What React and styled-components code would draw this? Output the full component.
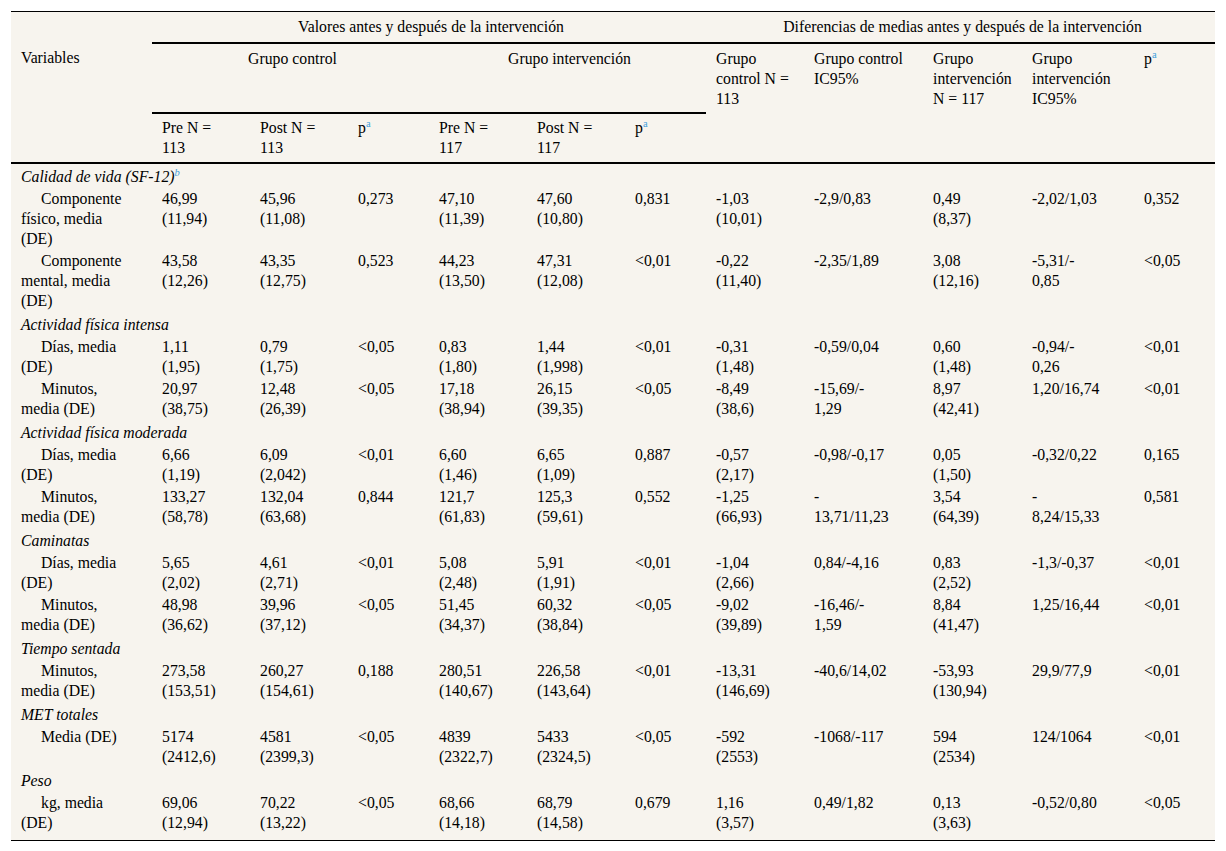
import React from 'react'
import styled, { createGlobalStyle } from 'styled-components'

const GlobalStyle = createGlobalStyle`
    html, body {
        margin: 0;
        padding: 0;
        background: #ffffff;
    }
    body {
        font-family: "Liberation Serif", "Times New Roman", serif;
        color: #000;
    }
`

const Page = styled.div`
    padding: 11px 11px 0 11px;
`

const Table = styled.table`
    width: 1204px;
    table-layout: fixed;
    border-collapse: collapse;
    background: #f7f4ee;
    border-top: 1px solid #000;
    border-bottom: 1px solid #000;
    font-size: 15.75px;
    line-height: 20px;
`

const Head = styled.thead`
    border-bottom: 2px solid #000;
`

const HeadCell = styled.th`
    font-weight: normal;
    text-align: ${(p) => (p.$center ? 'center' : 'left')};
    vertical-align: top;
    padding: 5px 6px 4px 10px;
    white-space: pre-line;
    border-bottom: ${(p) => (p.$rule ? '2px solid #000' : 'none')};
    tr:first-child > & {
        padding-bottom: 5px;
    }
    tr:nth-child(3) > & {
        padding-top: 4px;
    }
`

const SectionCell = styled.td`
    font-style: italic;
    padding: 3px 10px 1px 10px;
    white-space: nowrap;
`

const Cell = styled.td`
    vertical-align: top;
    padding: 1px 6px 1px 10px;
    white-space: pre-line;
    text-indent: ${(p) => (p.$indent ? '20px' : '0')};
    tr:last-child > & {
        padding-bottom: 7px;
    }
`

const Sup = styled.sup`
    color: #3f9fdc;
    font-size: 10.5px;
    line-height: 0;
    vertical-align: 6px;
`

const widths = [141, 98, 98, 81, 98, 98, 81, 98, 119, 99, 112, 81]

const sections = [
    {
        title: 'Calidad de vida (SF-12)',
        sup: 'b',
        rows: [
            ['Componente\nfísico, media\n(DE)', '46,99\n(11,94)', '45,96\n(11,08)', '0,273', '47,10\n(11,39)', '47,60\n(10,80)', '0,831', '-1,03\n(10,01)', '-2,9/0,83', '0,49\n(8,37)', '-2,02/1,03', '0,352'],
            ['Componente\nmental, media\n(DE)', '43,58\n(12,26)', '43,35\n(12,75)', '0,523', '44,23\n(13,50)', '47,31\n(12,08)', '<0,01', '-0,22\n(11,40)', '-2,35/1,89', '3,08\n(12,16)', '-5,31/-\n0,85', '<0,05'],
        ],
    },
    {
        title: 'Actividad física intensa',
        rows: [
            ['Días, media\n(DE)', '1,11\n(1,95)', '0,79\n(1,75)', '<0,05', '0,83\n(1,80)', '1,44\n(1,998)', '<0,01', '-0,31\n(1,48)', '-0,59/0,04', '0,60\n(1,48)', '-0,94/-\n0,26', '<0,01'],
            ['Minutos,\nmedia (DE)', '20,97\n(38,75)', '12,48\n(26,39)', '<0,05', '17,18\n(38,94)', '26,15\n(39,35)', '<0,05', '-8,49\n(38,6)', '-15,69/-\n1,29', '8,97\n(42,41)', '1,20/16,74', '<0,01'],
        ],
    },
    {
        title: 'Actividad física moderada',
        rows: [
            ['Días, media\n(DE)', '6,66\n(1,19)', '6,09\n(2,042)', '<0,01', '6,60\n(1,46)', '6,65\n(1,09)', '0,887', '-0,57\n(2,17)', '-0,98/-0,17', '0,05\n(1,50)', '-0,32/0,22', '0,165'],
            ['Minutos,\nmedia (DE)', '133,27\n(58,78)', '132,04\n(63,68)', '0,844', '121,7\n(61,83)', '125,3\n(59,61)', '0,552', '-1,25\n(66,93)', '-\n13,71/11,23', '3,54\n(64,39)', '-\n8,24/15,33', '0,581'],
        ],
    },
    {
        title: 'Caminatas',
        rows: [
            ['Días, media\n(DE)', '5,65\n(2,02)', '4,61\n(2,71)', '<0,01', '5,08\n(2,48)', '5,91\n(1,91)', '<0,01', '-1,04\n(2,66)', '0,84/-4,16', '0,83\n(2,52)', '-1,3/-0,37', '<0,01'],
            ['Minutos,\nmedia (DE)', '48,98\n(36,62)', '39,96\n(37,12)', '<0,05', '51,45\n(34,37)', '60,32\n(38,84)', '<0,05', '-9,02\n(39,89)', '-16,46/-\n1,59', '8,84\n(41,47)', '1,25/16,44', '<0,01'],
        ],
    },
    {
        title: 'Tiempo sentada',
        rows: [
            ['Minutos,\nmedia (DE)', '273,58\n(153,51)', '260,27\n(154,61)', '0,188', '280,51\n(140,67)', '226,58\n(143,64)', '<0,01', '-13,31\n(146,69)', '-40,6/14,02', '-53,93\n(130,94)', '29,9/77,9', '<0,01'],
        ],
    },
    {
        title: 'MET totales',
        rows: [
            ['Media (DE)', '5174\n(2412,6)', '4581\n(2399,3)', '<0,05', '4839\n(2322,7)', '5433\n(2324,5)', '<0,05', '-592\n(2553)', '-1068/-117', '594\n(2534)', '124/1064', '<0,01'],
        ],
    },
    {
        title: 'Peso',
        rows: [
            ['kg, media\n(DE)', '69,06\n(12,94)', '70,22\n(13,22)', '<0,05', '68,66\n(14,18)', '68,79\n(14,58)', '0,679', '1,16\n(3,57)', '0,49/1,82', '0,13\n(3,63)', '-0,52/0,80', '<0,05'],
        ],
    },
]

const P = () => (
    <>
        p<Sup>a</Sup>
    </>
)

const App = () => {
    const bodyRows = []
    sections.forEach((s, si) => {
        bodyRows.push(
            <tr key={'s' + si}>
                <SectionCell colSpan={12}>
                    {s.title}
                    {s.sup && <Sup>{s.sup}</Sup>}
                </SectionCell>
            </tr>
        )
        s.rows.forEach((r, ri) => {
            bodyRows.push(
                <tr key={'r' + si + '-' + ri}>
                    {r.map((c, ci) => (
                        <Cell key={ci} $indent={ci === 0}>
                            {c}
                        </Cell>
                    ))}
                </tr>
            )
        })
    })

    return (
        <Page>
            <GlobalStyle />
            <Table>
                <colgroup>
                    {widths.map((w, i) => (
                        <col key={i} style={{ width: w }} />
                    ))}
                </colgroup>
                <Head>
                    <tr>
                        <HeadCell />
                        <HeadCell colSpan={6} $center $rule>
                            Valores antes y después de la intervención
                        </HeadCell>
                        <HeadCell colSpan={5} $center $rule>
                            Diferencias de medias antes y después de la intervención
                        </HeadCell>
                    </tr>
                    <tr>
                        <HeadCell rowSpan={2}>Variables</HeadCell>
                        <HeadCell colSpan={3} $center $rule>
                            Grupo control
                        </HeadCell>
                        <HeadCell colSpan={3} $center $rule>
                            Grupo intervención
                        </HeadCell>
                        <HeadCell>{'Grupo\ncontrol N =\n113'}</HeadCell>
                        <HeadCell>{'Grupo control\nIC95%'}</HeadCell>
                        <HeadCell>{'Grupo\nintervención\nN = 117'}</HeadCell>
                        <HeadCell>{'Grupo\nintervención\nIC95%'}</HeadCell>
                        <HeadCell>
                            <P />
                        </HeadCell>
                    </tr>
                    <tr>
                        <HeadCell>{'Pre N =\n113'}</HeadCell>
                        <HeadCell>{'Post N =\n113'}</HeadCell>
                        <HeadCell>
                            <P />
                        </HeadCell>
                        <HeadCell>{'Pre N =\n117'}</HeadCell>
                        <HeadCell>{'Post N =\n117'}</HeadCell>
                        <HeadCell>
                            <P />
                        </HeadCell>
                        <HeadCell />
                        <HeadCell />
                        <HeadCell />
                        <HeadCell />
                        <HeadCell />
                    </tr>
                </Head>
                <tbody>{bodyRows}</tbody>
            </Table>
        </Page>
    )
}

export default App
